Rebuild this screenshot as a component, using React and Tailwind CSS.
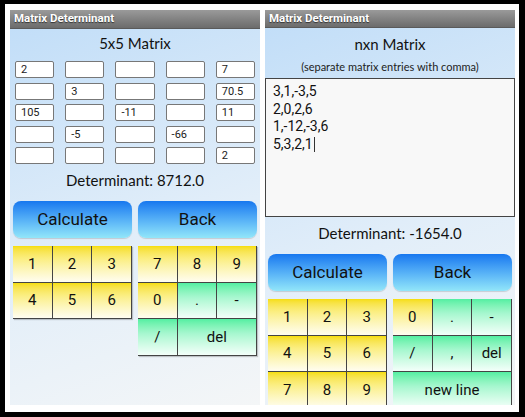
import React from 'react'

const font = { fontFamily: 'Roboto, "Liberation Sans", sans-serif' }
const round = { fontFamily: 'Lato, "Open Sans", sans-serif' }

const grid = [
  ['2', '', '', '', '7'],
  ['', '3', '', '', '70.5'],
  ['105', '', '-11', '', '11'],
  ['', '-5', '', '-66', ''],
  ['', '', '', '', '2'],
]

const yellow = 'bg-linear-to-b from-[#f6de00] via-[#fbee80] via-35% to-[#fffdf0]'
const green = 'bg-linear-to-b from-[#52efa2] via-[#a6f7cf] via-40% to-[#f3fffa]'

function TitleBar() {
  return (
    <div className="h-[19px] flex items-center pl-[4px] bg-linear-to-b from-[#9a9a9a] to-[#6c6c6c] border-b border-[#5a5a5a]">
      <span className="text-white font-bold text-[11.5px] [text-shadow:0_1px_1px_#333]" style={font}>Matrix Determinant</span>
    </div>
  )
}

function Key({ label, color, span = 1, h = 'h-[36.5px]' }) {
  return (
    <div
      className={`${color} ${h} ${span === 2 ? 'col-span-2' : span === 3 ? 'col-span-3' : ''} flex items-center justify-center border-r border-b border-[#444] text-[15px] text-[#111]`}
      style={font}
    >
      {label}
    </div>
  )
}

function Buttons() {
  return (
    <div className="flex gap-[6px] px-[3px]">
      {['Calculate', 'Back'].map((t) => (
        <div
          key={t}
          className="w-[119px] h-[37px] rounded-[8px] bg-linear-to-b from-[#1677ef] to-[#92e6f9] flex items-center justify-center text-[17px] text-[#111] shadow-[0_1px_1px_rgba(0,0,0,0.15)]"
          style={font}
        >
          {t}
        </div>
      ))}
    </div>
  )
}

function Screen({ children }) {
  return (
    <div className="w-[250px] h-[395px] flex flex-col overflow-hidden">
      <TitleBar />
      <div className="flex-1 flex flex-col bg-linear-[160deg] from-[#c2def8] via-[#e2eef9] via-55% to-[#f4f6f7]">
        {children}
      </div>
    </div>
  )
}

export default function App() {
  return (
    <div className="w-[525px] h-[417px] bg-black pt-[4px] pl-[5px]">
      <div className="w-[514px] h-[408px] bg-white flex gap-[5px] pt-[6px] pl-[5px]">
        <Screen>
          <div className="h-[20px] mt-[4px] text-center text-[15px] leading-[20px] text-[#111]" style={round}>5x5 Matrix</div>
          <div className="mt-[8px] px-[5px] grid grid-cols-5 gap-x-[11px] gap-y-[4.5px]">
            {grid.flat().map((v, i) => (
              <div
                key={i}
                className="h-[17px] bg-white border border-[#777] rounded-[2px] pl-[5px] text-[11px] leading-[15px] text-[#222]"
                style={font}
              >
                {v}
              </div>
            ))}
          </div>
          <div className="h-[20px] mt-[6px] text-center text-[15px] leading-[20px] text-[#111]" style={round}>Determinant: 8712.0</div>
          <div className="mt-[11px]"><Buttons /></div>
          <div className="mt-[8px] flex gap-[6px] px-[3px] items-start">
            <div className="w-[119px] grid grid-cols-3 shadow-[1px_1px_1px_rgba(0,0,0,0.2)]">
              {['1', '2', '3', '4', '5', '6'].map((k) => <Key key={k} label={k} color={yellow} />)}
            </div>
            <div className="w-[119px] grid grid-cols-3 shadow-[1px_1px_1px_rgba(0,0,0,0.2)]">
              {['7', '8', '9', '0'].map((k) => <Key key={k} label={k} color={yellow} />)}
              <Key label="." color={green} />
              <Key label="-" color={green} />
              <Key label="/" color={green} />
              <Key label="del" color={green} span={2} />
            </div>
          </div>
        </Screen>
        <Screen>
          <div className="h-[20px] mt-[6px] text-center text-[15px] leading-[20px] text-[#111]" style={round}>nxn Matrix</div>
          <div className="h-[14px] mt-[6px] text-center text-[11px] leading-[14px] text-[#222]" style={round}>(separate matrix entries with comma)</div>
          <div className="mt-[4px] h-[139px] bg-[#f8f8f8] border border-[#444] pl-[7px] pt-[4px] text-[14px] leading-[17.5px] text-[#111]" style={font}>
            <div>3,1,-3,5</div>
            <div>2,0,2,6</div>
            <div>1,-12,-3,6</div>
            <div>5,3,2,1<span className="inline-block w-px h-[15px] bg-[#333] align-[-3px] ml-[1px]" /></div>
          </div>
          <div className="h-[20px] mt-[6px] text-center text-[15px] leading-[20px] text-[#111]" style={round}>Determinant: -1654.0</div>
          <div className="mt-[11px]"><Buttons /></div>
          <div className="mt-[8px] flex gap-[6px] px-[3px] items-start">
            <div className="w-[119px] grid grid-cols-3">
              {['1', '2', '3', '4', '5', '6', '7', '8', '9'].map((k) => <Key key={k} label={k} color={yellow} />)}
            </div>
            <div className="w-[119px] grid grid-cols-3">
              <Key label="0" color={yellow} />
              <Key label="." color={green} />
              <Key label="-" color={green} />
              <Key label="/" color={green} />
              <Key label="," color={green} />
              <Key label="del" color={green} />
              <Key label="new line" color={green} span={3} />
            </div>
          </div>
        </Screen>
      </div>
    </div>
  )
}
